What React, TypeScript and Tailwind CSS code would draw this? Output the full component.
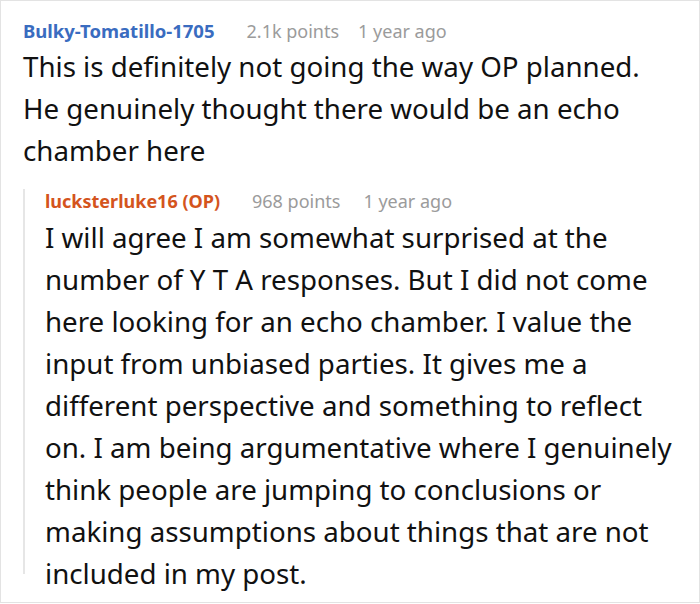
import React from "react";

const topLines = [
  "This is definitely not going the way OP planned.",
  "He genuinely thought there would be an echo",
  "chamber here",
];

const replyLines = [
  "I will agree I am somewhat surprised at the",
  "number of Y T A responses. But I did not come",
  "here looking for an echo chamber. I value the",
  "input from unbiased parties. It gives me a",
  "different perspective and something to reflect",
  "on. I am being argumentative where I genuinely",
  "think people are jumping to conclusions or",
  "making assumptions about things that are not",
  "included in my post.",
];

export default function App() {
  return (
    <div
      className="w-[700px] h-[603px] border border-[#e3e3e3] bg-white overflow-hidden"
      style={{ fontFamily: '"Noto Sans", "Open Sans", sans-serif' }}
    >
      <div className="pl-[22px] pt-[18px]">
        <div className="flex items-center h-[24px] text-[18px] leading-[24px]">
          <span className="font-bold text-[18.5px] text-[#3a6cc0]">Bulky-Tomatillo-1705</span>
          <span className="ml-[32px] text-[#9b9b9b]">2.1k points</span>
          <span className="ml-[19px] text-[#9b9b9b]">1 year ago</span>
        </div>
        <div className="mt-[2px] text-[27.7px] leading-[42px] text-[#111111]">
          {topLines.map((l) => (
            <div key={l} className="whitespace-nowrap">
              {l}
            </div>
          ))}
        </div>
        <div className="mt-[30px] h-[385px] border-l-2 border-[#e6e6e6] pl-[20px]">
          <div className="-mt-[12px] flex items-center h-[24px] text-[18px] leading-[24px]">
            <span className="font-bold text-[#d4541d]">lucksterluke16 (OP)</span>
            <span className="ml-[32px] text-[#9b9b9b]">968 points</span>
            <span className="ml-[23px] text-[#9b9b9b]">1 year ago</span>
          </div>
          <div className="mt-[3px] text-[27.7px] leading-[42px] text-[#111111]">
            {replyLines.map((l) => (
              <div key={l} className="whitespace-nowrap">
                {l}
              </div>
            ))}
          </div>
        </div>
      </div>
    </div>
  );
}
